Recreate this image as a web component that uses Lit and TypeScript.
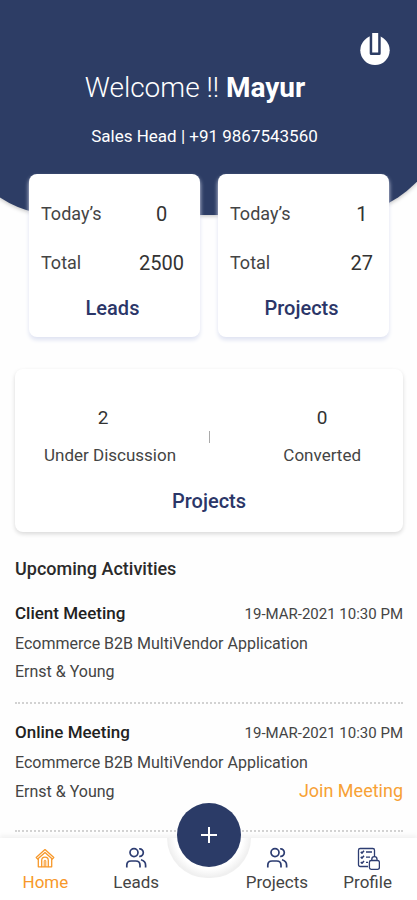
import { LitElement, html, css, svg, nothing } from "lit";
import { customElement, property } from "lit/decorators.js";
import { classMap } from "lit/directives/class-map.js";

const homeIcon = svg`
  <svg viewBox="0 0 22 22" width="22" height="22" fill="none" stroke="currentColor" stroke-width="1.3" stroke-linejoin="round" stroke-linecap="round" aria-hidden="true">
    <path d="M2.2 10.600 11 2.600l8.800 8-1.500 1.500L11 5.500l-7.300 6.600z"/>
    <path d="M4.300 12v7.800h13.400v-7.800"/>
    <path d="M7.700 19.600v-6.100a3.300 3.300 0 0 1 6.600 0v6.100"/>
    <path d="M10.200 19.600v-5.600a.8.8 0 0 1 1.600 0v5.600" stroke-width="1"/>
  </svg>`;

const peopleIcon = svg`
  <svg viewBox="0 0 22 22" width="22" height="22" fill="none" stroke="currentColor" stroke-width="1.700" aria-hidden="true">
    <circle cx="9" cy="5.600" r="4"/>
    <path d="M14.200 1.900c2.400-.3 4.100 1.500 4.100 3.700s-1.700 4-4.100 3.700"/>
    <path d="M1.800 20.600v-2.400c0-2.600 1.900-4.200 4.300-4.200h4.600c2.400 0 4.300 1.600 4.300 4.200v2.400"/>
    <path d="M16 12.800c2.800.7 4.600 2.700 4.600 5.500v2.300"/>
  </svg>`;

const profileIcon = svg`
  <svg viewBox="0 0 24 24" width="24" height="24" fill="none" stroke="currentColor" stroke-width="1.300" stroke-linejoin="round" aria-hidden="true">
    <path d="M12 20.500H4.200A1.700 1.700 0 0 1 2.500 18.800V4.200A1.700 1.700 0 0 1 4.200 2.500h12.600a1.700 1.700 0 0 1 1.700 1.700V11"/>
    <path d="m4.800 5.900 1.200 1.200 2-2.400M4.800 10.900 6 12.100l2-2.400M4.800 16.100 6 17.300l2-2.400" stroke-width="1.500"/>
    <path d="M10 6h6M10 11.200h4M10 16.300h2"/>
    <rect x="13.400" y="14.500" width="10" height="8.800" rx="1.800" fill="#fff"/>
    <path d="M15.800 14.500v-1.300a2.600 2.600 0 0 1 5.200 0v1.300"/>
  </svg>`;

@customElement("stat-card")
class StatCard extends LitElement {
  @property() heading = "";
  @property() today = "";
  @property() total = "";

  static styles = css`
    :host {
      flex: 1;
      display: block;
      padding: 28px 16px 16px 12px;
      border-radius: 8px;
      background: #fff;
      box-shadow: 0 3px 4px #dfe3f2;
    }
    .stats {
      display: grid;
      grid-template-columns: 1fr auto;
      row-gap: 25px;
      margin: 0;
      font-size: 18px;
      line-height: 24px;
      color: #444;
    }
    .value {
      margin: 0;
      font-size: 20px;
      text-align: center;
      color: #333;
    }
    .title {
      margin: 20px 0 0;
      font-size: 20px;
      line-height: 26px;
      font-weight: 500;
      text-align: center;
      color: #2b3668;
    }
  `;

  render() {
    return html`
      <dl class="stats">
        <dt>Today’s</dt>
        <dd class="value">${this.today}</dd>
        <dt>Total</dt>
        <dd class="value">${this.total}</dd>
      </dl>
      <h2 class="title">${this.heading}</h2>
    `;
  }
}

@customElement("activity-item")
class ActivityItem extends LitElement {
  @property() heading = "";
  @property() when = "";
  @property() project = "";
  @property() client = "";
  @property({ type: Boolean }) online = false;

  static styles = css`
    :host {
      display: block;
      border-bottom: 2px dotted #d2d2d2;
    }
    .activity {
      padding: 16px 0;
      font-size: 16px;
      line-height: 28px;
      color: #444;
    }
    .activity.online {
      padding-bottom: 24px;
    }
    .row {
      display: flex;
      justify-content: space-between;
      align-items: baseline;
    }
    .title {
      margin: 0 0 5px;
      font-size: 17px;
      line-height: 24px;
      font-weight: 500;
      color: #222;
    }
    .when {
      font-size: 15px;
      line-height: 24px;
    }
    .text {
      margin: 0;
    }
    .join {
      font-size: 18px;
      line-height: 28px;
      color: #f7a135;
      text-decoration: none;
    }
  `;

  render() {
    return html`
      <article class=${classMap({ activity: true, online: this.online })}>
        <div class="row">
          <h3 class="title">${this.heading}</h3>
          <time class="when">${this.when}</time>
        </div>
        <p class="text">${this.project}</p>
        <div class="row">
          <p class="text">${this.client}</p>
          ${this.online ? html`<a class="join" href="#join">Join Meeting</a>` : nothing}
        </div>
      </article>
    `;
  }
}

@customElement("app-root")
class AppRoot extends LitElement {
  static styles = css`
    :host {
      display: flex;
      flex-direction: column;
      min-height: 100vh;
      font-family: Roboto, "Liberation Sans", sans-serif;
      background: #fefefe;
      color: #333;
    }
    .hero {
      position: relative;
      overflow: hidden;
      display: flex;
      flex-direction: column;
      height: 220px;
      box-sizing: border-box;
      padding: 30px 27px 0;
      color: #fff;
    }
    .dome {
      position: absolute;
      inset: -120px -28px 5px -47px;
      border-radius: 105px;
      background: #2d3d65;
      box-shadow: 0 1px 4px #bbb;
    }
    .power {
      position: relative;
      align-self: flex-end;
      display: flex;
      padding: 0;
      border: 0;
      background: none;
      color: #fff;
      cursor: pointer;
    }
    .welcome {
      position: relative;
      margin: 4px 0 0;
      padding-right: 27px;
      font-size: 28px;
      line-height: 36px;
      font-weight: 300;
      text-align: center;
    }
    .name {
      font-weight: 700;
    }
    .contact {
      position: relative;
      margin: 19px 0 0;
      padding-right: 8px;
      font-size: 17px;
      line-height: 22px;
      text-align: center;
    }
    .cards {
      position: relative;
      display: flex;
      gap: 18px;
      margin: -46px 28px 0 29px;
    }
    .overview {
      margin: 32px 14px 0 15px;
      padding: 37px 29px 18px;
      border-radius: 8px;
      background: #fff;
      box-shadow: 0 2px 4px #d9d9d9;
    }
    .counts {
      display: grid;
      grid-template-columns: 1fr 1px 1fr;
      align-items: center;
    }
    .count {
      display: flex;
      flex-direction: column-reverse;
      gap: 13px;
      justify-self: start;
      text-align: center;
      font-size: 17px;
      line-height: 24px;
      color: #444;
    }
    .count.open .number {
      padding-right: 14px;
    }
    .count.converted {
      justify-self: end;
      margin-right: 13px;
    }
    .number {
      font-size: 19px;
      color: #333;
    }
    .divider {
      height: 12px;
      background: #aaa;
    }
    .title {
      margin: 21px 0 0;
      font-size: 20px;
      line-height: 26px;
      font-weight: 500;
      text-align: center;
      color: #2b3668;
    }
    .activities {
      flex: 1;
      margin: 25px 14px 6px 15px;
    }
    .heading {
      margin: 0 0 4px;
      font-size: 18px;
      line-height: 24px;
      font-weight: 500;
      color: #2a2a2a;
    }
    .nav {
      position: sticky;
      bottom: 0;
      display: grid;
      grid-template-columns: 1fr 1fr 50px 1fr 1fr;
      height: 62px;
      box-sizing: border-box;
      padding: 8px 4px 0 0;
      background: #fff;
      box-shadow: 0 -2px 5px #efefef;
    }
    .tab {
      display: flex;
      flex-direction: column;
      align-items: center;
      font-size: 17px;
      line-height: 24px;
      color: #444;
      text-decoration: none;
    }
    .icon {
      display: flex;
      align-items: center;
      height: 24px;
      color: #2d3d72;
    }
    .tab.active,
    .tab.active .icon {
      color: #f7982a;
    }
    .notch {
      position: absolute;
      top: 0;
      left: 50%;
      width: 84px;
      height: 40px;
      margin-left: -42px;
      border-radius: 0 0 42px 42px;
      background: radial-gradient(circle at 50% -3px, #fff 34px, #f0f0f0 42px);
    }
    .add {
      position: absolute;
      top: -35px;
      left: 50%;
      width: 64px;
      height: 64px;
      margin-left: -32px;
      padding: 0;
      border: 0;
      border-radius: 50%;
      display: flex;
      align-items: center;
      justify-content: center;
      background: #2b3b67;
      color: #fff;
      cursor: pointer;
    }
  `;

  private tabs(items: { label: string; icon: unknown; active?: boolean }[]) {
    return items.map(
      (t) => html`
        <a class=${classMap({ tab: true, active: !!t.active })} href="#${t.label.toLowerCase()}">
          <span class="icon">${t.icon}</span>${t.label}
        </a>
      `
    );
  }

  render() {
    return html`
      <header class="hero">
        <div class="dome"></div>
        <button class="power" aria-label="Log out">
          <svg viewBox="0 0 30 36" width="30" height="36" aria-hidden="true">
            <circle cx="15" cy="20.300" r="14.700" fill="#fff" />
            <path d="M9.700 2h11v21.500a1.500 1.500 0 0 1-1.500 1.500h-8a1.500 1.500 0 0 1-1.500-1.500z" fill="#2d3d65" />
            <path d="M12.200 3h6v19.500h-6z" fill="#fff" />
          </svg>
        </button>
        <h1 class="welcome">Welcome !! <span class="name">Mayur</span></h1>
        <p class="contact">Sales Head | +91 9867543560</p>
      </header>

      <section class="cards">
        <stat-card heading="Leads" today="0" total="2500"></stat-card>
        <stat-card heading="Projects" today="1" total="27"></stat-card>
      </section>

      <section class="overview">
        <div class="counts">
          <div class="count open">Under Discussion<span class="number">2</span></div>
          <div class="divider"></div>
          <div class="count converted">Converted<span class="number">0</span></div>
        </div>
        <h2 class="title">Projects</h2>
      </section>

      <main class="activities">
        <h2 class="heading">Upcoming Activities</h2>
        <activity-item
          heading="Client Meeting"
          when="19-MAR-2021 10:30 PM"
          project="Ecommerce B2B MultiVendor Application"
          client="Ernst &amp; Young"
        ></activity-item>
        <activity-item
          heading="Online Meeting"
          when="19-MAR-2021 10:30 PM"
          project="Ecommerce B2B MultiVendor Application"
          client="Ernst &amp; Young"
          online
        ></activity-item>
      </main>

      <nav class="nav">
        <div class="notch"></div>
        ${this.tabs([
          { label: "Home", icon: homeIcon, active: true },
          { label: "Leads", icon: peopleIcon },
        ])}
        <span></span>
        ${this.tabs([
          { label: "Projects", icon: peopleIcon },
          { label: "Profile", icon: profileIcon },
        ])}
        <button class="add" aria-label="Add">
          <svg viewBox="0 0 18 18" width="18" height="18" fill="none" stroke="currentColor" stroke-width="2" aria-hidden="true">
            <path d="M9 1v16M1 9h16" />
          </svg>
        </button>
      </nav>
    `;
  }
}
